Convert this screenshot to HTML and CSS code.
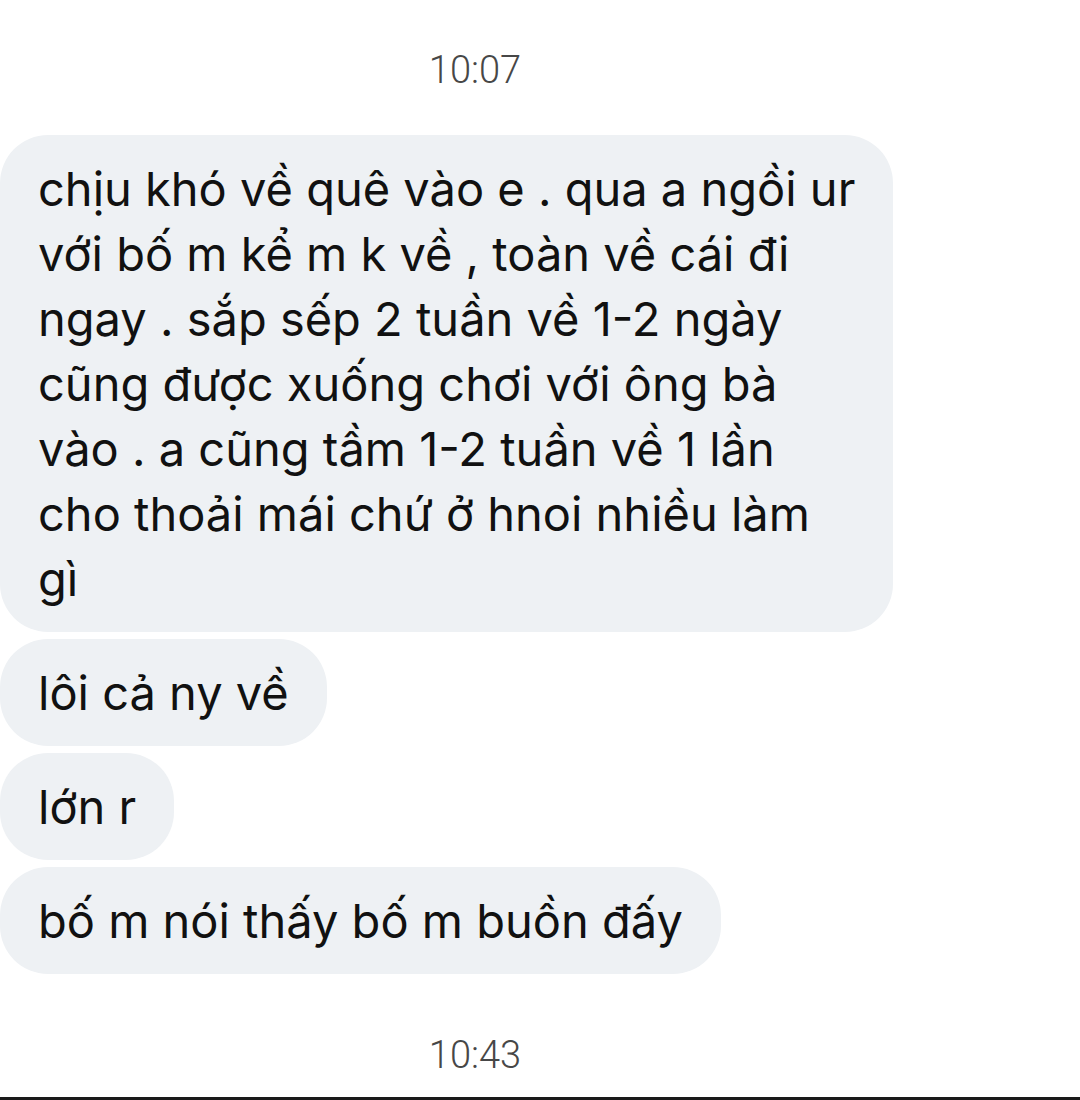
FILE: index.html
```html
<!DOCTYPE html>
<html lang="vi">
<head>
<meta charset="utf-8">
<title>Tin nhắn</title>
<link rel="stylesheet" href="styles.css">
</head>
<body>
<main class="chat">
  <div class="stamp stamp-top">10:07</div>
  <div class="thread">
    <div class="bubble">chịu khó về quê vào e . qua a ngồi ur<br>với bố m kể m k về , toàn về cái đi<br>ngay . sắp sếp 2 tuần về 1-2 ngày<br>cũng được xuống chơi với ông bà<br>vào . a cũng tầm 1-2 tuần về 1 lần<br>cho thoải mái chứ ở hnoi nhiều làm<br>gì</div>
    <div class="bubble">lôi cả ny về</div>
    <div class="bubble">lớn r</div>
    <div class="bubble">bố m nói thấy bố m buồn đấy</div>
  </div>
  <div class="stamp stamp-bottom">10:43</div>
</main>
<div class="bottom-bar"></div>
</body>
</html>
```
FILE: styles.css
```css
html, body {
  margin: 0;
  padding: 0;
  background: #ffffff;
}
body {
  width: 1080px;
  height: 1100px;
  overflow: hidden;
  position: relative;
  font-family: "Inter", "Liberation Sans", sans-serif;
}
.chat {
  display: flex;
  flex-direction: column;
  padding-top: 47px;
}
.stamp {
  font-family: "Roboto", "Liberation Sans", sans-serif;
  font-weight: 300;
  font-size: 38px;
  line-height: 46px;
  color: #474747;
  text-align: center;
  padding-right: 130px;
}
.stamp-bottom {
  margin-top: 58px;
}
.thread {
  display: flex;
  flex-direction: column;
  align-items: flex-start;
  gap: 7px;
  margin-top: 42px;
}
.bubble {
  background: #eef1f4;
  color: #111111;
  font-size: 47px;
  line-height: 65px;
  padding: 21px 38px 21px 38px;
  border-radius: 48px;
  white-space: nowrap;
}
.bottom-bar {
  position: absolute;
  left: 0;
  right: 0;
  bottom: 0;
  height: 3px;
  background: #1a1a1a;
}
```
